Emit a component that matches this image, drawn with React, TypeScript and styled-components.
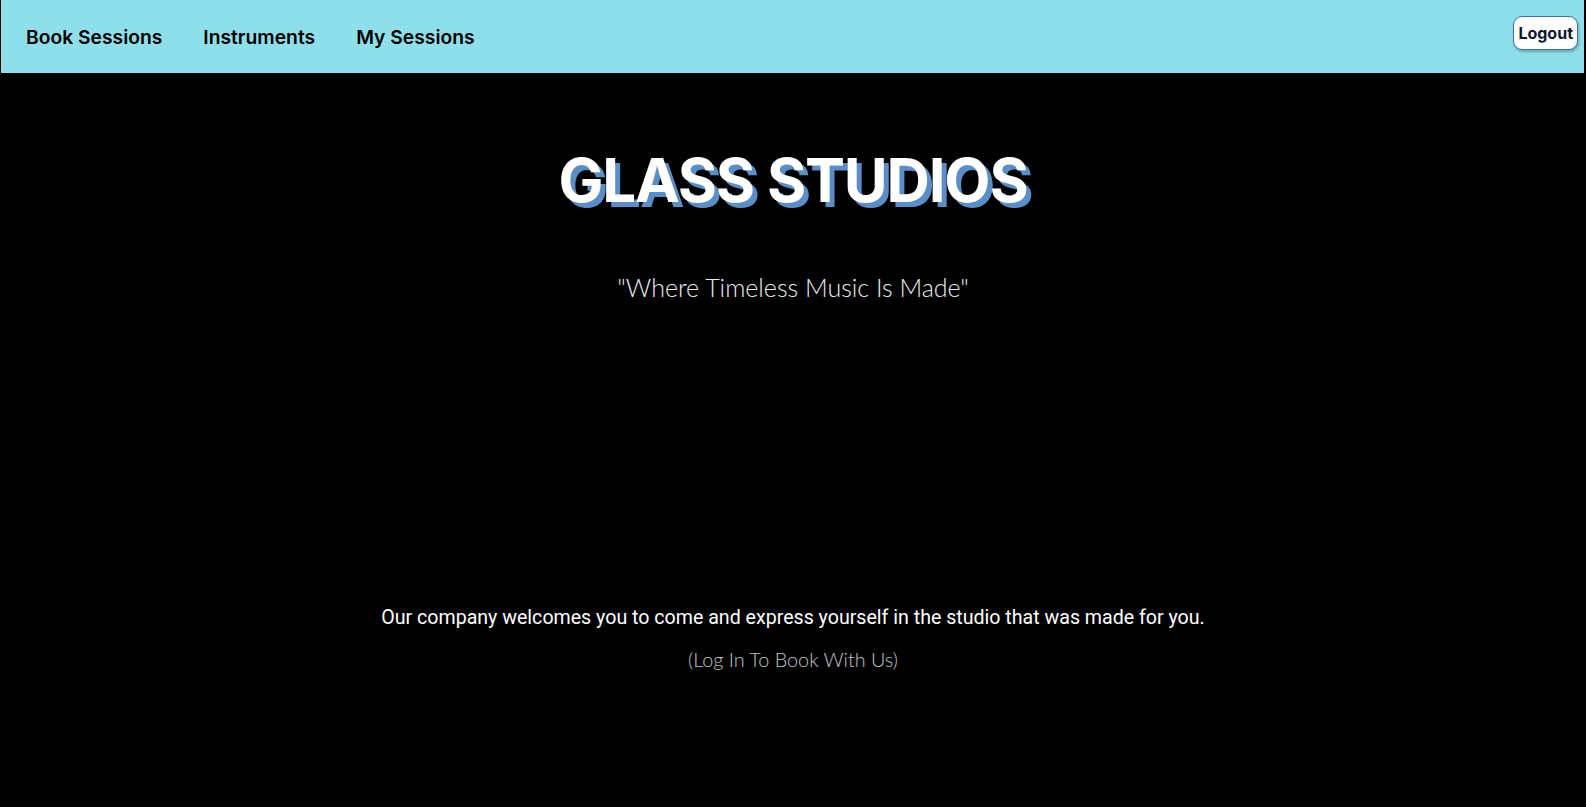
import styled, { createGlobalStyle } from 'styled-components';

const GlobalStyle = createGlobalStyle`
  html, body {
    margin: 0;
    padding: 0;
    background: #000;
  }
  body {
    font-family: Inter, "Liberation Sans", sans-serif;
  }
`;

const Page = styled.div`
  min-height: 100vh;
  background: #000;
  color: #fff;
`;

const NavBar = styled.nav`
  height: 73px;
  margin: 0 2px 0 1px;
  background: #8fdfeb;
  display: flex;
  align-items: center;
  justify-content: space-between;
  padding: 0 6px 0 25px;
`;

const NavLinks = styled.div`
  display: flex;
  align-items: center;
  gap: 41px;
`;

const NavLink = styled.a`
  font-family: Inter, sans-serif;
  font-weight: 600;
  font-size: 19.3px;
  color: #000;
  text-decoration: none;
  cursor: pointer;
`;

const LogoutButton = styled.button`
  font-family: Inter, sans-serif;
  font-weight: 700;
  font-size: 16px;
  color: #0d1530;
  background: #fff;
  border: 1px solid #3a6fb3;
  border-radius: 9px;
  padding: 0 4px;
  height: 34px;
  margin-top: -7px;
  box-shadow: 1px 2px 3px rgba(0, 0, 0, 0.25);
  cursor: pointer;
`;

const Hero = styled.main`
  display: flex;
  flex-direction: column;
  align-items: center;
  text-align: center;
`;

const Title = styled.h1`
  margin: 77px 0 0;
  font-family: Inter, sans-serif;
  font-weight: 700;
  font-size: 60px;
  line-height: 60px;
  letter-spacing: -1.2px;
  color: #fff;
  text-shadow: 5px 5px 0 #5b8ec6;
`;

const Tagline = styled.p`
  margin: 62px 0 0;
  font-family: Lato, sans-serif;
  font-weight: 300;
  font-size: 25px;
  line-height: 30px;
  color: #ececec;
`;

const Welcome = styled.p`
  margin: 304px 0 0;
  font-family: Roboto, sans-serif;
  font-weight: 400;
  font-size: 19.6px;
  line-height: 24px;
  color: #fff;
`;

const LoginHint = styled.p`
  margin: 17px 0 0;
  font-family: Lato, sans-serif;
  font-weight: 300;
  font-size: 19.8px;
  line-height: 24px;
  color: #c4c4c4;
`;

const links = ['Book Sessions', 'Instruments', 'My Sessions'];

export default function App() {
  return (
    <Page>
      <GlobalStyle />
      <NavBar>
        <NavLinks>
          {links.map((l) => (
            <NavLink key={l}>{l}</NavLink>
          ))}
        </NavLinks>
        <LogoutButton>Logout</LogoutButton>
      </NavBar>
      <Hero>
        <Title>GLASS STUDIOS</Title>
        <Tagline>"Where Timeless Music Is Made"</Tagline>
        <Welcome>
          Our company welcomes you to come and express yourself in the studio that was made for you.
        </Welcome>
        <LoginHint>(Log In To Book With Us)</LoginHint>
      </Hero>
    </Page>
  );
}
